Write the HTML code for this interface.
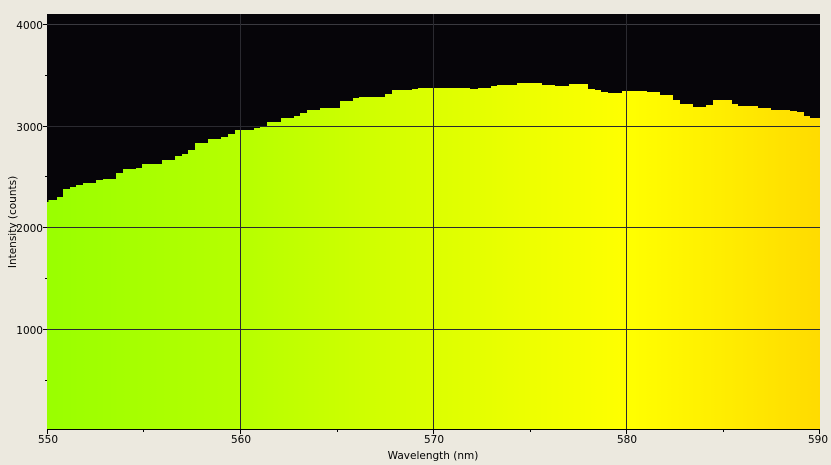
<!DOCTYPE html>
<html><head><style>
html,body{margin:0;padding:0;background:#ece9df;}
svg{display:block;}
text{font-family:"DejaVu Sans","Liberation Sans",sans-serif;font-size:10.5px;fill:#000;}
</style></head><body>
<svg width="831" height="465" xmlns="http://www.w3.org/2000/svg">
<defs>
<linearGradient id="g" x1="0" x2="1" y1="0" y2="0">
<stop offset="0" stop-color="#99ff00"/>
<stop offset="0.25" stop-color="#b6ff00"/>
<stop offset="0.5" stop-color="#dcff00"/>
<stop offset="0.75" stop-color="#ffff00"/>
<stop offset="1" stop-color="#ffdb00"/>
</linearGradient>
</defs>
<rect x="47" y="14" width="773" height="416" fill="#060509"/>
<path fill="url(#g)" d="M47,430 V202 H48.5 V200 H57 V197 H63 V189 H70 V187 H76 V185 H83 V183 H96 V180 H103 V179 H116 V173 H123 V169 H136 V168 H142 V164 H162 V160 H175 V156 H182 V154 H188 V150 H195 V143 H208 V139 H221 V137 H228 V134 H235 V130 H254 V128 H260 V126 H267 V122 H281 V118 H294 V116 H300 V113 H307 V110 H320 V108 H340 V101 H353 V98 H359 V97 H385 V94 H392 V90 H412 V89 H418 V88 H470 V89 H478 V88 H491 V86 H497 V85 H517 V83 H542 V85 H555 V86 H569 V84 H588 V89 H595 V90 H601 V92 H608 V93 H622 V91 H647 V92 H660 V95 H673 V100 H680 V104 H693 V107 H706 V105 H713 V100 H732 V104 H738 V106 H758 V108 H771 V110 H790 V111 H797 V112 H804 V116 H810 V118 H820 V430 Z"/>
<g stroke="#2a2a30" stroke-width="1">
<line x1="47" y1="24.5" x2="820" y2="24.5" stroke="#3a3a40"/>
<line x1="47" y1="126.5" x2="820" y2="126.5"/>
<line x1="47" y1="227.5" x2="820" y2="227.5"/>
<line x1="47" y1="329.5" x2="820" y2="329.5"/>
<line x1="240.5" y1="14" x2="240.5" y2="430"/>
<line x1="433.5" y1="14" x2="433.5" y2="430"/>
<line x1="626.5" y1="14" x2="626.5" y2="430"/>
</g>
<g stroke="#000" stroke-width="1">
<line x1="47" y1="429.5" x2="820" y2="429.5"/>
<line x1="47.5" y1="429" x2="47.5" y2="434"/>
<line x1="240.5" y1="429" x2="240.5" y2="434"/>
<line x1="433.5" y1="429" x2="433.5" y2="434"/>
<line x1="626.5" y1="429" x2="626.5" y2="434"/>
<line x1="819.5" y1="429" x2="819.5" y2="434"/>
<line x1="143.5" y1="429" x2="143.5" y2="432"/>
<line x1="337.5" y1="429" x2="337.5" y2="432"/>
<line x1="530.5" y1="429" x2="530.5" y2="432"/>
<line x1="723.5" y1="429" x2="723.5" y2="432"/>
<line x1="43" y1="24.5" x2="47" y2="24.5"/>
<line x1="43" y1="126.5" x2="47" y2="126.5"/>
<line x1="43" y1="227.5" x2="47" y2="227.5"/>
<line x1="43" y1="329.5" x2="47" y2="329.5"/>
<line x1="45" y1="75.5" x2="47" y2="75.5"/>
<line x1="45" y1="176.5" x2="47" y2="176.5"/>
<line x1="45" y1="278.5" x2="47" y2="278.5"/>
<line x1="45" y1="380.5" x2="47" y2="380.5"/>
</g>
<g text-anchor="end">
<text x="43" y="29">4000</text>
<text x="43" y="131">3000</text>
<text x="43" y="232">2000</text>
<text x="43" y="334">1000</text>
</g>
<g text-anchor="middle">
<text x="48" y="443">550</text>
<text x="241" y="443">560</text>
<text x="434" y="443">570</text>
<text x="627" y="443">580</text>
<text x="818" y="443">590</text>
<text x="433" y="459">Wavelength (nm)</text>
<text transform="translate(16,222) rotate(-90)">Intensity (counts)</text>
</g>
</svg>
</body></html>
